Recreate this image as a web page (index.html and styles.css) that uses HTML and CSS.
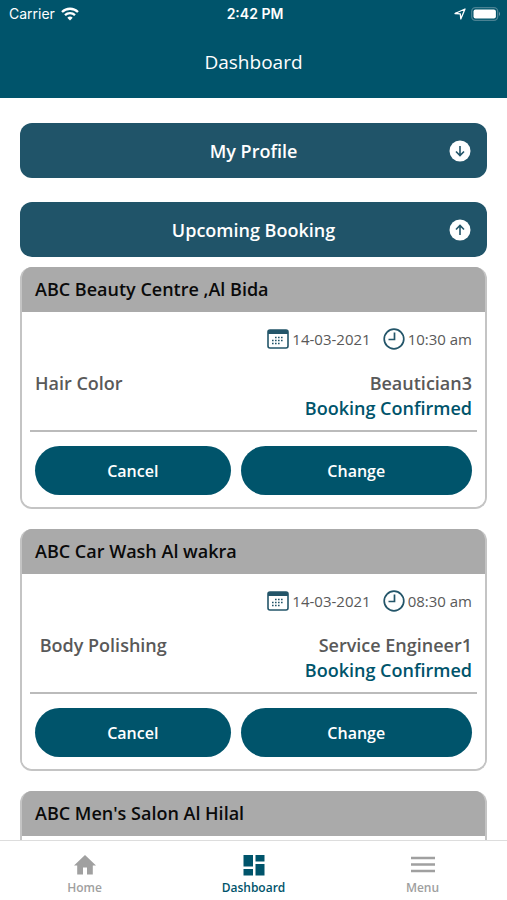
FILE: index.html
```html
<!DOCTYPE html>
<html lang="en">
<head>
<meta charset="utf-8">
<meta name="viewport" content="width=device-width, initial-scale=1">
<title>Dashboard</title>
<link rel="stylesheet" href="styles.css">
</head>
<body>
<svg class="defs" aria-hidden="true">
  <symbol id="calendar" viewBox="0 0 22 20">
    <rect x="1" y="1" width="20" height="18" rx="2" fill="#fff" stroke="#235569" stroke-width="1.6"/>
    <path d="M1 5V3a2 2 0 0 1 2-2h16a2 2 0 0 1 2 2v2z" fill="#235569"/>
    <path d="M8 8.500h1.600M11 8.500h1.600M14 8.500h1.600M5 11.500h1.600M8 11.500h1.600M11 11.500h1.600M14 11.500h1.600M5 14.500h1.600M8 14.500h1.600M11 14.500h1.600" stroke="#235569" stroke-width="1.600"/>
  </symbol>
  <symbol id="clock" viewBox="0 0 22 22">
    <circle cx="11" cy="11" r="9.800" fill="#fff" stroke="#235569" stroke-width="1.700"/>
    <path d="M11.500 4.500V11.500H5.500" fill="none" stroke="#235569" stroke-width="1.700"/>
  </symbol>
</svg>
<header class="top">
  <div class="status">
    <span class="carrier">Carrier
      <svg width="18" height="14" viewBox="0 0 18 14" fill="none" stroke="#fff" stroke-width="2.300" aria-hidden="true">
        <path d="M1 5a11.500 11.500 0 0 1 16 0M4 8.200a7.200 7.200 0 0 1 10 0"/>
        <path d="M6.300 10.700a4 4 0 0 1 5.400 0L9 13.500z" fill="#fff" stroke="none"/>
      </svg>
    </span>
    <span class="time">2:42 PM</span>
    <span class="power">
      <svg width="12" height="12" viewBox="0 0 12 12" fill="none" stroke="#fff" stroke-width="1.300" stroke-linejoin="round" aria-hidden="true"><path d="M1 5.500L11 1L6.800 11L6.300 5.800z"/></svg>
      <svg width="30" height="14" viewBox="0 0 30 14" aria-hidden="true">
        <rect x=".7" y=".7" width="26" height="12.600" rx="3.800" fill="none" stroke="#4a8293" stroke-width="1.300"/>
        <rect x="2.500" y="2.500" width="22.400" height="9" rx="2" fill="#fff"/>
        <path d="M28 4.800q2 2.200 0 4.400z" fill="#6f9dac"/>
      </svg>
    </span>
  </div>
  <h1>Dashboard</h1>
</header>
<main>
  <button class="section" type="button">My Profile
    <svg class="arrow" width="22" height="22" viewBox="0 0 22 22" aria-hidden="true"><circle cx="11" cy="11" r="10.500" fill="#fff"/><path d="M11 6v9.500M7 11.500l4 4l4-4" fill="none" stroke="#235569" stroke-width="1.600"/></svg>
  </button>
  <button class="section" type="button" aria-expanded="true">Upcoming Booking
    <svg class="arrow" width="22" height="22" viewBox="0 0 22 22" aria-hidden="true"><circle cx="11" cy="11" r="10.500" fill="#fff"/><path d="M11 16V6.500M7 10.500l4-4l4 4" fill="none" stroke="#235569" stroke-width="1.600"/></svg>
  </button>
  <div class="bookings">
    <article class="card">
      <h2>ABC Beauty Centre ,Al Bida</h2>
      <div class="body">
        <div class="when">
          <span><svg width="22" height="20" aria-hidden="true"><use href="#calendar"/></svg>14-03-2021</span>
          <span><svg width="22" height="22" aria-hidden="true"><use href="#clock"/></svg>10:30 am</span>
        </div>
        <div class="service"><span>Hair Color</span><span>Beautician3</span></div>
        <p class="state">Booking Confirmed</p>
        <div class="actions"><button type="button">Cancel</button><button type="button">Change</button></div>
      </div>
    </article>
    <article class="card">
      <h2>ABC Car Wash Al wakra</h2>
      <div class="body">
        <div class="when">
          <span><svg width="22" height="20" aria-hidden="true"><use href="#calendar"/></svg>14-03-2021</span>
          <span><svg width="22" height="22" aria-hidden="true"><use href="#clock"/></svg>08:30 am</span>
        </div>
        <div class="service"><span>&nbsp;Body Polishing</span><span>Service Engineer1</span></div>
        <p class="state">Booking Confirmed</p>
        <div class="actions"><button type="button">Cancel</button><button type="button">Change</button></div>
      </div>
    </article>
    <article class="card">
      <h2>ABC Men's Salon Al Hilal</h2>
      <div class="body"></div>
    </article>
  </div>
</main>
<nav class="tabs">
  <a href="#home"><svg width="24" height="24" viewBox="0 0 24 24" fill="#a0a0a0" aria-hidden="true"><path d="M12 2L23 12.500H19.800V21.500H14V14.500H10V21.500H4.200V12.500H1z"/></svg>Home</a>
  <a href="#dashboard" class="current" aria-current="page"><svg width="24" height="24" viewBox="0 0 24 24" fill="#00546b" aria-hidden="true"><path d="M1.500 2h9.500v11.500H1.500zM1.500 16h9.500v6.500H1.500zM13.500 2h9v6.500h-9zM13.500 11h9V22.500h-9z"/></svg>Dashboard</a>
  <a href="#menu"><svg width="24" height="24" viewBox="0 0 24 24" stroke="#a0a0a0" stroke-width="2.400" aria-hidden="true"><path d="M0 5h24M0 11.500h24M0 18h24"/></svg>Menu</a>
</nav>
</body>
</html>
```

FILE: styles.css
```css
* { box-sizing: border-box; }

body {
  margin: 0;
  height: 100vh;
  display: flex;
  flex-direction: column;
  background: #fff;
  color: #595959;
  font-family: "Open Sans", sans-serif;
}

h1, h2, p { margin: 0; }
svg { flex: none; display: block; }
button { border: 0; font-family: inherit; color: #fff; cursor: pointer; }
.defs { position: absolute; width: 0; height: 0; }

.top {
  flex: none;
  padding-bottom: 22px;
  background: #00546b;
  color: #fff;
}
.status {
  display: grid;
  grid-template-columns: 1fr auto 1fr;
  align-items: center;
  height: 28px;
  padding: 0 6px 0 9px;
  font: 14px/28px Inter, sans-serif;
}
.carrier { display: flex; align-items: center; gap: 6px; }
.time { font-weight: 600; }
.power { display: flex; align-items: center; justify-content: flex-end; gap: 5px; }
h1 {
  padding-top: 20px;
  font-size: 19px;
  line-height: 28px;
  font-weight: 400;
  text-align: center;
}

main {
  flex: 1;
  min-height: 0;
  overflow-y: auto;
  scrollbar-width: none;
  padding: 25px 20px 0;
}
.section {
  position: relative;
  display: block;
  width: 100%;
  height: 55px;
  padding: 0;
  border-radius: 12px;
  background: #205469;
  font-size: 18px;
  font-weight: 600;
}
.section + .section { margin-top: 24px; }
.arrow { position: absolute; right: 16px; top: 17px; }

.bookings { display: flex; flex-direction: column; gap: 20px; padding: 10px 0 20px; }
.card {
  border-radius: 12px;
  border: 2px solid #c4c4c4;
  border-top: 0;
  overflow: hidden;
  background: linear-gradient(#aaa 45px, #fff 45px);
}
.card h2 {
  padding: 0 13px;
  background: #aaa;
  color: #0a0a0a;
  font-size: 18px;
  line-height: 45px;
  font-weight: 600;
}
.body { min-height: 40px; padding: 14px 8px 12px; background: #fff; }
.when {
  display: flex;
  justify-content: flex-end;
  gap: 12px;
  padding: 0 5px;
  font-size: 15px;
  line-height: 26px;
}
.when span { display: flex; align-items: center; gap: 3px; }
.service, .state { padding: 0 5px; font-size: 18px; line-height: 25px; font-weight: 600; }
.service { display: flex; justify-content: space-between; margin-top: 19px; }
.state { color: #00546b; text-align: right; }
.actions {
  display: grid;
  grid-template-columns: 196fr 232fr;
  gap: 10px;
  margin-top: 9px;
  padding: 14px 5px 0;
  border-top: 2px solid #bbb;
}
.actions button {
  height: 49px;
  border-radius: 25px;
  background: #00546b;
  font-size: 16px;
  font-weight: 600;
}

.tabs {
  flex: none;
  display: grid;
  grid-template-columns: repeat(3, 1fr);
  height: 60px;
  padding-top: 12px;
  border-top: 1px solid #ddd;
  background: #fff;
}
.tabs a {
  display: flex;
  flex-direction: column;
  align-items: center;
  gap: 2px;
  color: #a0a0a0;
  font-size: 12px;
  line-height: 18px;
  font-weight: 600;
  text-decoration: none;
}
.tabs .current { color: #00546b; }
```
